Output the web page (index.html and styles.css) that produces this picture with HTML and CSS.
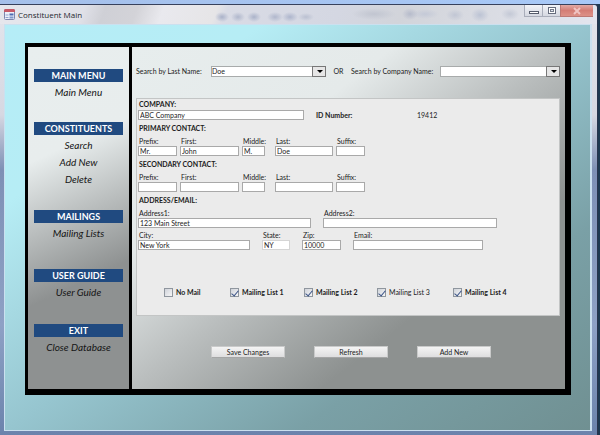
FILE: index.html
```html
<!DOCTYPE html>
<html lang="en">
<head>
<meta charset="utf-8">
<title>Constituent Main</title>
<link rel="stylesheet" href="styles.css">
</head>
<body>
<div class="window">
  <header class="titlebar">
    <svg class="app-icon" viewBox="0 0 11 11" aria-hidden="true">
      <rect x=".5" y=".5" width="10" height="10" rx="1" fill="#edf1fa" stroke="#7d86ae"/>
      <path d="M0 1.500Q0 0 1.500 0H9.500Q11 0 11 1.500V3H0Z" fill="#c65a68"/>
      <path d="M1.500 6H4.500M1.500 8.500H4.500" stroke="#8fa3cf"/>
      <rect x="5.500" y="4.500" width="4" height="2" fill="#4d6bb0"/>
      <rect x="5.500" y="7.500" width="4" height="2" fill="#7f97cc"/>
    </svg>
    <h1 class="title">Constituent Main</h1>
    <div class="controls">
      <button class="control" type="button" aria-label="Minimize"><svg viewBox="0 0 12 8"><rect x="1.500" y="4.500" width="9" height="2" fill="#fff" stroke="#555b6b"/></svg></button>
      <button class="control" type="button" aria-label="Maximize"><svg viewBox="0 0 12 8"><rect x="2.500" y=".5" width="7" height="6" fill="#fff" stroke="#666c7d"/><rect x="4.500" y="2.500" width="3" height="2" fill="#dfe3ee" stroke="#777d8d"/></svg></button>
      <button class="control close" type="button" aria-label="Close"><svg viewBox="0 0 12 8"><path d="M3 1L9 7M9 1L3 7" stroke="#f0c4c2" stroke-width="2"/></svg></button>
    </div>
  </header>
  <div class="client">
    <div class="frame">
      <nav class="sidebar">
        <section><h2>MAIN MENU</h2><a href="#">Main Menu</a></section>
        <section><h2>CONSTITUENTS</h2><a href="#">Search</a><a href="#">Add New</a><a href="#">Delete</a></section>
        <section><h2>MAILINGS</h2><a href="#">Mailing Lists</a></section>
        <section><h2>USER GUIDE</h2><a href="#">User Guide</a></section>
        <section><h2>EXIT</h2><a href="#">Close Database</a></section>
      </nav>
      <main class="main">
        <div class="search">
          <label for="by-last">Search by Last Name:</label>
          <span class="combo"><select id="by-last"><option>Doe</option></select></span>
          <span class="or">OR</span>
          <label for="by-company">Search by Company Name:</label>
          <span class="combo"><select id="by-company"><option></option></select></span>
        </div>
        <form class="panel" id="record">
          <div class="company">
            <div><label class="heading" for="company">COMPANY:</label><input type="text" id="company" value="ABC Company"></div>
            <b>ID Number:</b><output>19412</output>
          </div>
          <h3 class="heading">PRIMARY CONTACT:</h3>
          <div class="fields person">
            <div><label for="p1">Prefix:</label><input type="text" id="p1" value="Mr."></div>
            <div><label for="p2">First:</label><input type="text" id="p2" value="John"></div>
            <div><label for="p3">Middle:</label><input type="text" id="p3" value="M."></div>
            <div><label for="p4">Last:</label><input type="text" id="p4" value="Doe"></div>
            <div><label for="p5">Suffix:</label><input type="text" id="p5"></div>
          </div>
          <h3 class="heading">SECONDARY CONTACT:</h3>
          <div class="fields person">
            <div><label for="s1">Prefix:</label><input type="text" id="s1"></div>
            <div><label for="s2">First:</label><input type="text" id="s2"></div>
            <div><label for="s3">Middle:</label><input type="text" id="s3"></div>
            <div><label for="s4">Last:</label><input type="text" id="s4"></div>
            <div><label for="s5">Suffix:</label><input type="text" id="s5"></div>
          </div>
          <h3 class="heading">ADDRESS/EMAIL:</h3>
          <div class="fields street">
            <div><label for="a1">Address1:</label><input type="text" id="a1" value="123 Main Street"></div>
            <div><label for="a2">Address2:</label><input type="text" id="a2"></div>
          </div>
          <div class="fields city">
            <div><label for="c1">City:</label><input type="text" id="c1" value="New York"></div>
            <div><label for="c2">State:</label><input type="text" id="c2" class="faint" value="NY"></div>
            <div><label for="c3">Zip:</label><input type="text" id="c3" value="10000"></div>
            <div><label for="c4">Email:</label><input type="text" id="c4"></div>
          </div>
          <div class="lists">
            <label><input type="checkbox">No Mail</label>
            <label><input type="checkbox" checked>Mailing List 1</label>
            <label><input type="checkbox" checked>Mailing List 2</label>
            <label class="regular"><input type="checkbox" checked>Mailing List 3</label>
            <label><input type="checkbox" checked>Mailing List 4</label>
          </div>
        </form>
        <div class="actions">
          <button type="button">Save Changes</button>
          <button type="button">Refresh</button>
          <button type="button">Add New</button>
        </div>
      </main>
    </div>
  </div>
</div>
</body>
</html>
```
FILE: styles.css
```css
* { box-sizing: border-box; }

body {
  margin: 0;
  min-height: 100vh;
  display: flex;
  padding: 4px 4px 0 0;
  background: linear-gradient(90deg, transparent 60%, #1d3850) 0 100% / 100% calc(100% - 4px) no-repeat,
    linear-gradient(90deg, #a5c0ea, #a8c9f8);
  font: 7px/9px Lato, "Open Sans", sans-serif;
  color: #1c1c1c;
}

h1, h2, h3 { margin: 0; font-size: inherit; }

button, input, select { font: inherit; color: inherit; }

.window {
  flex: 1;
  display: flex;
  flex-direction: column;
  padding: 0 5px 4px 4px;
  border-top: 1px solid #37415c;
  border-right: 1px solid #28344d;
  border-radius: 0 4px 0 0;
  background: linear-gradient(180deg, #e3e5ec 0, #d6d8e2 110px, #7e90b5 165px, #8ea1c5 320px, #6b83ac 100%);
}

.titlebar {
  height: 19px;
  display: flex;
  align-items: center;
  gap: 3px;
  margin: 0 -5px 0 -4px;
  padding-left: 4px;
  border-radius: 0 4px 0 0;
  background:
    radial-gradient(ellipse 7px 5px at 222px 12px, #aab2c9, transparent),
    radial-gradient(ellipse 7px 5px at 238px 12px, #b0b7cc, transparent),
    radial-gradient(ellipse 7px 5px at 254px 12px, #aab2c9, transparent),
    radial-gradient(ellipse 8px 5px at 275px 12px, #b0b7cc, transparent),
    radial-gradient(ellipse 8px 5px at 290px 12px, #adb5cc, transparent),
    radial-gradient(ellipse 8px 4px at 306px 12px, #bac0d1, transparent),
    radial-gradient(ellipse 22px 6px at 374px 9px, #c1c5d0, transparent),
    radial-gradient(ellipse 8px 6px at 410px 9px, #b6bbcb, transparent),
    radial-gradient(ellipse 14px 5px at 425px 9px, #c4c9d7, transparent),
    radial-gradient(ellipse 9px 6px at 455px 10px, #c1c6d4, transparent),
    radial-gradient(ellipse 9px 7px at 480px 10px, #bcc3d4, transparent),
    radial-gradient(ellipse 9px 6px at 510px 9px, #c4c9d6, transparent),
    linear-gradient(110deg, #e6e7ed 0, #e0e1e8 80px, #cfd0d6 100px, #d3d3d8 130px, #e9e9ee 155px, #e6e5e7 205px, #d9dbe5 215px, #d4d7e2 320px, #d2d4da 380px, #e3e5ee 100%);
}

.app-icon { width: 11px; height: 11px; }

.title {
  font: 400 8px/12px "Open Sans", Lato, sans-serif;
  color: #26282e;
}

.controls {
  display: flex;
  align-self: flex-start;
  margin-left: auto;
  margin-right: 4px;
}

.control {
  width: 18px;
  height: 12px;
  display: grid;
  place-items: center;
  padding: 0;
  border: solid #a9adba;
  border-width: 0 0 1px 1px;
  background: linear-gradient(#f2f3f8, #d5d8e1);
}

.control svg { width: 12px; height: 8px; }

.close { width: 33px; border-color: #bd7974; background: linear-gradient(#e1a9a4, #d47d75 50%, #dd9187); }

.client {
  flex: 1;
  display: grid;
  padding: 18px 19px 35px 20px;
  border: solid #cbe0ef;
  border-width: 1px 2px 1px 1px;
  background: linear-gradient(145deg, #b5edf7 0, #b6edf5 22%, #96c5cf 50%, #7aa0a6 75%, #709092 100%);
}

.frame {
  display: grid;
  grid-template-columns: 101px 1fr;
  gap: 3px;
  padding: 4px 6px 6px 3px;
  background: #000;
}

.sidebar {
  display: grid;
  grid-template-rows: 53px 88px 59px 55px auto;
  padding: 22px 6px 0;
  text-align: center;
  font-size: 10px;
  background: linear-gradient(155deg, #e8eeee 0, #e8eded 30%, #b9bdbd 49%, #8e9191 67%);
}

.sidebar h2 {
  margin-bottom: 2px;
  font-size: 9px;
  line-height: 13px;
  background: #204a80;
  color: #fff;
}

.sidebar a {
  display: block;
  line-height: 17px;
  font-style: italic;
  color: #151515;
  text-decoration: none;
}

.main {
  padding: 18px 5px 24px 4px;
  background: linear-gradient(142deg, #e7eded 0, #e5eaea 30%, #babebe 50%, #8d9190 72%);
}

.search {
  display: grid;
  grid-template-columns: 71px 115px 17px 85px 120px;
  column-gap: 4px;
  align-items: center;
  height: 12px;
  margin-bottom: 21px;
}

.search .or { text-align: center; }

.combo { position: relative; display: block; }

.combo select {
  display: block;
  width: 100%;
  height: 11px;
  padding: 0 12px 0 0;
  appearance: none;
  border: 1px solid #a8abab;
  border-radius: 0;
  background: #fff;
}

.combo::before {
  content: "";
  position: absolute;
  inset: 0 0 0 auto;
  width: 12px;
  border: 1px solid #777;
  background: #e6e6e6;
  pointer-events: none;
}

.combo::after {
  content: "";
  position: absolute;
  right: 3px;
  top: 4px;
  border: 3px solid transparent;
  border-top-color: #000;
  border-bottom: 0;
  pointer-events: none;
}

.panel {
  padding: 0 1px 18px;
  border: 1px solid #c3c5c5;
  background: #ebebeb;
}

.heading {
  display: block;
  margin-top: 3px;
  padding-left: 1px;
  line-height: 10px;
  font-weight: 700;
}

.company {
  display: grid;
  grid-template-columns: 166px 89px 1fr;
  column-gap: 12px;
  align-items: end;
}

.company .heading { margin: 0 0 1px; }

.fields { display: grid; margin-top: 4px; }

.fields label { display: block; padding-left: 1px; }

.person { grid-template-columns: 39px 59px 23px 58px 29px; column-gap: 3px; }

.person > :nth-child(n+4) { margin-left: 7px; margin-right: -7px; }

.street { grid-template-columns: 173px 174px; column-gap: 12px; }

.city { grid-template-columns: 112px 28px 39px 130px; column-gap: 12px; margin-top: 3px; }

input[type="text"] {
  display: block;
  width: 100%;
  height: 10px;
  padding: 0 1px;
  border: 1px solid #a9a9a9;
  border-radius: 0;
  background: #fff;
}

input.faint { border-color: #d5d5d5; }

.lists {
  display: grid;
  grid-template-columns: 66px 74px 73px 76px 76px;
  margin: 38px 0 0 26px;
  font-weight: 700;
}

.lists label { display: flex; align-items: center; gap: 3px; }

.lists .regular { font-weight: 400; }

input[type="checkbox"] {
  appearance: none;
  width: 9px;
  height: 9px;
  margin: 0;
  border: 1px solid #8f969e;
  background: linear-gradient(135deg, #cfd3da, #f6f6f6);
}

input[type="checkbox"]:checked::after {
  content: "";
  display: block;
  width: 3px;
  height: 6px;
  margin: 0 auto;
  border: solid #3b5488;
  border-width: 0 1px 1px 0;
  transform: rotate(40deg);
}

.actions {
  display: grid;
  grid-template-columns: repeat(3, 74px);
  column-gap: 29px;
  margin: 30px 0 0 75px;
}

.actions button {
  height: 12px;
  padding: 0;
  border: 1px solid #c9caca;
  border-bottom-color: #a5a6a6;
  background: linear-gradient(#f4f4f4, #dededf);
}
```
